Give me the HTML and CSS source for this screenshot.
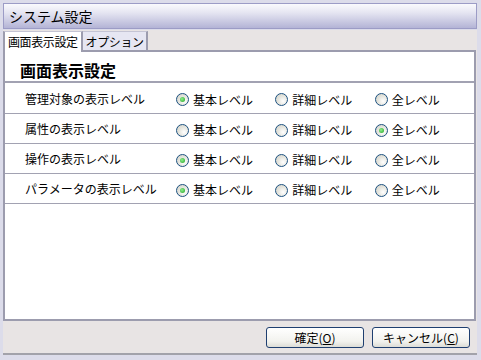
FILE: index.html
```html
<!DOCTYPE html>
<html>
<head>
    <title>システム設定</title>
    <link rel="stylesheet" href="styles.css">
</head>
<body>
    <div class="window">
        <div class="titlebar">システム設定</div>

        <div class="window-body">
            <div class="tabs">
                <div class="tab active">画面表示設定</div>
                <div class="tab">オプション</div>
                <div class="tab-rest"></div>
            </div>

            <div class="panel">
                <h1>画面表示設定</h1>

                <div class="row">
                    <div class="label">管理対象の表示レベル</div>
                    <label class="option"><span class="radio checked"></span>基本レベル</label>
                    <label class="option"><span class="radio"></span>詳細レベル</label>
                    <label class="option"><span class="radio"></span>全レベル</label>
                </div>
                <div class="row">
                    <div class="label">属性の表示レベル</div>
                    <label class="option"><span class="radio"></span>基本レベル</label>
                    <label class="option"><span class="radio"></span>詳細レベル</label>
                    <label class="option"><span class="radio checked"></span>全レベル</label>
                </div>
                <div class="row">
                    <div class="label">操作の表示レベル</div>
                    <label class="option"><span class="radio checked"></span>基本レベル</label>
                    <label class="option"><span class="radio"></span>詳細レベル</label>
                    <label class="option"><span class="radio"></span>全レベル</label>
                </div>
                <div class="row">
                    <div class="label">パラメータの表示レベル</div>
                    <label class="option"><span class="radio checked"></span>基本レベル</label>
                    <label class="option"><span class="radio"></span>詳細レベル</label>
                    <label class="option"><span class="radio"></span>全レベル</label>
                </div>
            </div>

            <div class="footer">
                <button class="button">確定(<u>O</u>)</button>
                <button class="button">キャンセル(<u>C</u>)</button>
            </div>
        </div>
    </div>
</body>
</html>
```

FILE: styles.css
```css
/* System settings dialog */
body {
    margin: 0;
    padding: 0;
    font-family: "Noto Sans CJK JP", "DejaVu Sans", sans-serif;
    font-size: 12px;
    color: #000;
    background-color: #dcdcea;
}

.window {
    width: 481px;
    height: 360px;
    box-sizing: border-box;
    padding: 3px 4px 5px 3px;
    display: flex;
    flex-direction: column;
}

.titlebar {
    height: 26px;
    box-sizing: border-box;
    border: 1px solid #9c9cc6;
    background: linear-gradient(#fafafd, #e6e6f2 35%, #b4b4d6);
    font-size: 14px;
    line-height: 24px;
    padding-left: 5px;
}

.window-body {
    flex: 1;
    display: flex;
    flex-direction: column;
    margin-top: 1px;
    background-color: #e8e4e4;
    border-bottom: 2px solid #a2a2aa;
}

.tabs {
    display: flex;
    height: 22px;
    padding-top: 1px;
    box-sizing: border-box;
}

.tab {
    padding: 0 2px 0 3px;
    line-height: 20px;
    letter-spacing: -0.4px;
    background-color: #e6e6f2;
    border-top: 1px solid #c4c4d4;
    border-right: 2px solid #9c9cae;
    border-bottom: 2px solid #9c9cae;
}

.tab.active {
    background-color: #fff;
    border-left: 2px solid #9c9cae;
    border-bottom: none;
    padding: 0 3px 0 3px;
}

.tab-rest {
    flex: 1;
    border-bottom: 2px solid #9c9cae;
    margin-right: 1px;
}

.panel {
    height: 269px;
    box-sizing: border-box;
    background-color: #fff;
    border-left: 2px solid #9c9cae;
    border-right: 2px solid #9c9cae;
    border-bottom: 2px solid #9c9cae;
    margin-right: 1px;
}

h1 {
    margin: 0;
    font-size: 16px;
    font-weight: bold;
    height: 29px;
    line-height: 36px;
    padding-left: 15px;
    border-bottom: 2px solid #a2a2b2;
}

.row {
    display: flex;
    align-items: center;
    height: 26px;
    box-sizing: content-box;
    border-bottom: 1px solid #a2a2b2;
    padding-left: 20px;
    padding-top: 3px;
    line-height: 14px;
}

.row:first-of-type {
    height: 27px;
}

.label {
    width: 152px;
    padding-bottom: 2px;
}

.option {
    width: 100px;
    display: flex;
    align-items: center;
}

.radio {
    width: 11px;
    height: 11px;
    border: 1px solid #1c5180;
    border-radius: 50%;
    background: radial-gradient(circle at 65% 65%, #fff, #e2e2da 55%, #cfcfc6);
    margin-right: 4px;
    position: relative;
}

.radio.checked::after {
    content: "";
    position: absolute;
    left: 3px;
    top: 3px;
    width: 5px;
    height: 5px;
    border-radius: 50%;
    background: radial-gradient(circle at 40% 40%, #8ef08e, #21a121);
}

.footer {
    flex: 1;
    display: flex;
    justify-content: flex-end;
    align-items: center;
    gap: 8px;
    padding-right: 7px;
    padding-top: 1px;
}

.button {
    width: 98px;
    height: 21px;
    font-family: inherit;
    font-size: 12px;
    padding: 0;
    border: 1px solid #1f3f70;
    border-radius: 3px;
    background: linear-gradient(#ffffff, #f2f2ee 70%, #dcdcd6);
    cursor: pointer;
}
```
